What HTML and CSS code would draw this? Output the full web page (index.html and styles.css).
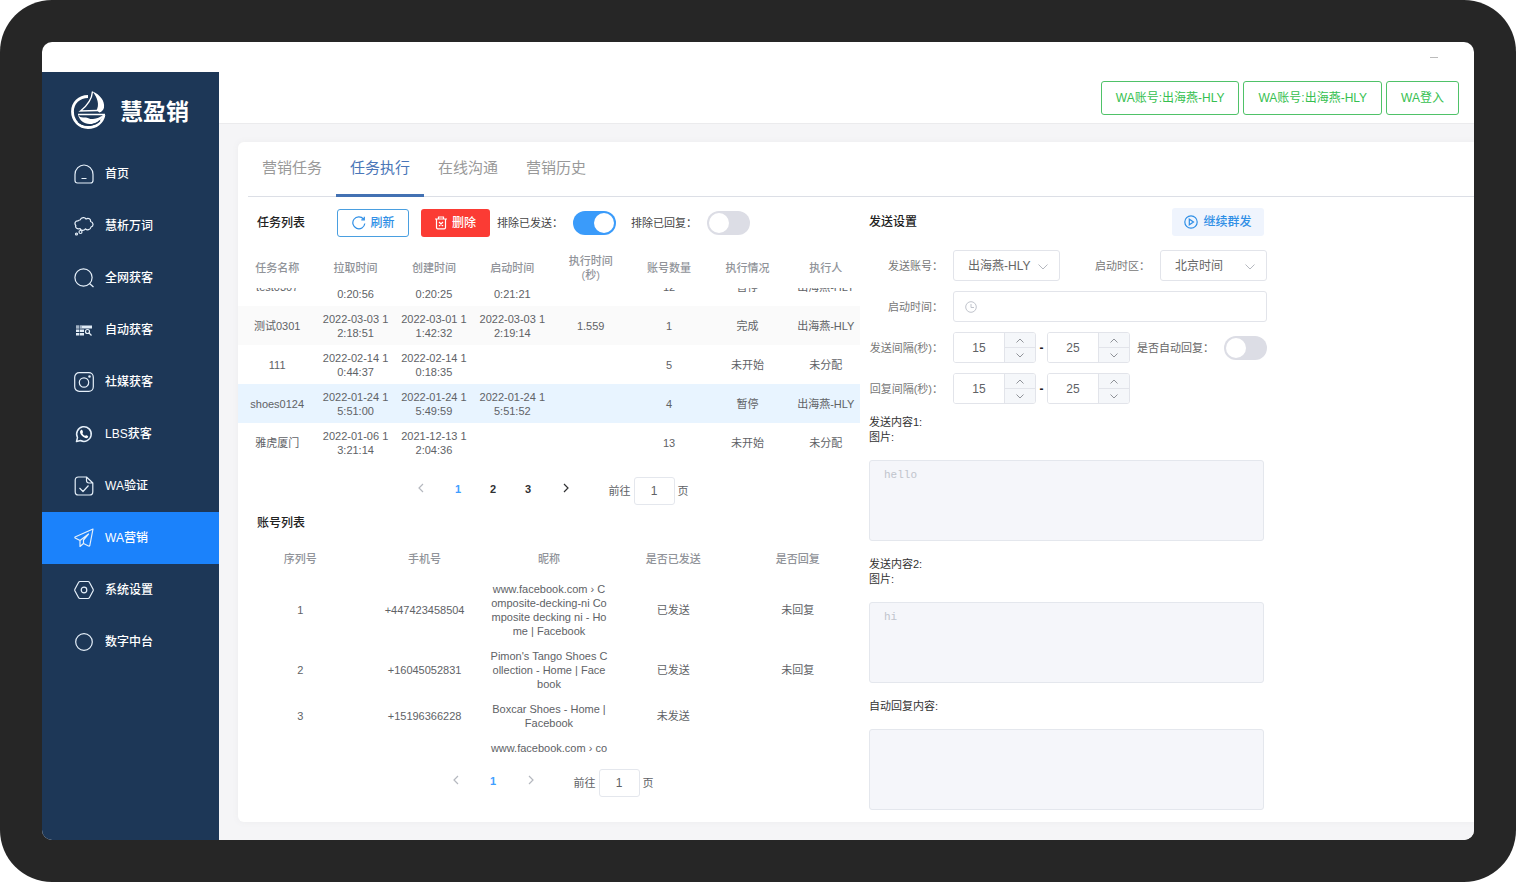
FILE: index.html
```html
<!DOCTYPE html>
<html lang="zh-CN">
	<head>
		<meta charset="UTF-8">
		<title>慧盈销</title>
		<link rel="stylesheet" href="styles.css">
	</head>
	<body>
		<div class="frame">
			<div class="screen">
				<div class="titlebar"><span class="minimize"></span></div>
				<div class="layout">
					<!-- 左侧菜单 -->
					<aside class="sidebar">
						<div class="logo">
							<svg width="36" height="40" viewBox="0 0 36 40" fill="none">
								<path d="M17 6.500C8 6.500 1.500 13 1.500 21.500C1.500 31 8.500 37.500 17 37.500C25 37.500 31.500 32.500 33 25" stroke="#fff" stroke-width="2.800"/>
								<path d="M21.500 1.500C29 4.500 34 11 33 17.500C32.500 20 31 21.500 28.500 22.500L25.500 20.500C28.500 15 27 8 21.500 1.500Z" fill="#fff"/>
								<path d="M21.500 1.500C21 8 17 15 9.500 21L26.500 20.500" stroke="#fff" stroke-width="1.400"/>
								<path d="M7 24.500H34" stroke="#fff" stroke-width="1.600"/>
								<path d="M7 24.500C9 28.500 12 27 15 27.500C18 28 19 29.500 22 29C26 28.500 29 27 32 25.500C30 31.500 25 34 18.500 34C13 34 8.500 30.500 7 24.500Z" fill="#fff"/>
								<path d="M7 31.500C11 36 24 36.500 29 30.500" stroke="#1d3757" stroke-width="1.200"/>
							</svg>
							<span class="logo-text">慧盈销</span>
						</div>
						<nav class="menu">
							<a href="#" class="menu-item">
								<svg class="menu-icon" viewBox="0 0 20 20"><path d="M1 10.500C1 5 5.500 1 10 1S19 5 19 10.500V16.500Q19 19 16.500 19H3.500Q1 19 1 16.500Z"/><path d="M7.500 14.500H12.500"/></svg>
								首页
							</a>
							<a href="#" class="menu-item">
								<svg class="menu-icon" viewBox="0 0 20 20"><path d="M6 4C7.500 1 11 1 12 3C14.500 1.500 17 3 16.500 5.500C19.500 6 20 10 17 11C16.500 14 13 14.500 11.500 12.800C10 15 6.500 14.800 6 12.500C3.500 13.500 1 12 1.800 9.500C0 7.500 1.500 4.500 4 5C4.500 4.300 5 4 6 4Z"/><circle cx="6.500" cy="16" r="1.500"/><circle cx="2.500" cy="18" r="1"/></svg>
								慧析万词
							</a>
							<a href="#" class="menu-item">
								<svg class="menu-icon" viewBox="0 0 20 20"><circle cx="9.500" cy="9.500" r="8.600"/><path d="M15.500 15.500L19.500 19"/></svg>
								全网获客
							</a>
							<a href="#" class="menu-item">
								<svg class="menu-icon" viewBox="0 0 20 20"><path fill="#dfeaf5" stroke="none" d="M2 5.500H18V8.500H2ZM2 9.500H10V12H2ZM2 13H10V15.500H2Z"/><path stroke="#1d3757" stroke-width=".6" d="M5.500 5V16M2 7H8"/><circle cx="13.500" cy="11.500" r="2"/><path d="M15 13L17.500 15.500"/></svg>
								自动获客
							</a>
							<a href="#" class="menu-item">
								<svg class="menu-icon" viewBox="0 0 20 20"><rect x=".7" y=".7" width="18.600" height="18.600" rx="4.500"/><circle cx="10" cy="10.500" r="4.700"/><circle cx="15.500" cy="4.500" r=".7"/></svg>
								社媒获客
							</a>
							<a href="#" class="menu-item">
								<svg class="menu-icon" viewBox="0 0 20 20"><path stroke-width="1.500" d="M2.500 17.500L3.500 13.500A7.300 7.300 0 1 1 6.500 16.500Z"/><path fill="#fff" stroke="none" d="M7 6C8 5.500 8.500 6 9 8C9 8.500 8.300 9 8.500 9.500C9 10.500 10 11.500 11 11.800C11.500 12 12 11 12.500 11.200C14 11.800 14.500 12.300 14 13.200C13 15 10.500 14 8.500 12.300C6.500 10.500 5 7.500 7 6Z"/></svg>
								LBS获客
							</a>
							<a href="#" class="menu-item">
								<svg class="menu-icon" viewBox="0 0 20 20"><path d="M12.500 1H4.500Q1.200 1 1.200 4.300V15.700Q1.200 19 4.500 19H15.500Q18.800 19 18.800 15.700V7ZM12.500 1V4.500Q12.500 7 15 7H18.800M5.500 12L9 15.500L14.500 9.500"/></svg>
								WA验证
							</a>
							<a href="#" class="menu-item active">
								<svg class="menu-icon" viewBox="0 0 20 20"><path d="M19 1L1 9Q.7 9.500 1.200 10L6 12.500V18.500L9.500 15.500L14.500 18Q15.500 18.300 15.800 17.500L19 1ZM6 12.500L14.500 6L9.500 12V15.500"/></svg>
								WA营销
							</a>
							<a href="#" class="menu-item">
								<svg class="menu-icon" viewBox="0 0 20 20"><path d="M6 1.500H14Q15 1.500 15.500 2.500L19 9Q19.500 10 19 11L15.500 17.500Q15 18.500 14 18.500H6Q5 18.500 4.500 17.500L1 11Q.5 10 1 9L4.500 2.500Q5 1.500 6 1.500Z"/><circle cx="10" cy="10" r="2.800"/></svg>
								系统设置
							</a>
							<a href="#" class="menu-item">
								<svg class="menu-icon" viewBox="0 0 20 20"><circle cx="10" cy="10" r="8.300"/></svg>
								数字中台
							</a>
						</nav>
					</aside>

					<main class="main">
						<header class="header">
							<button type="button" class="btn-wa">WA账号:出海燕-HLY</button>
							<button type="button" class="btn-wa">WA账号:出海燕-HLY</button>
							<button type="button" class="btn-wa">WA登入</button>
						</header>

						<div class="card">
							<nav class="tabs">
								<a href="#" class="tab">营销任务</a>
								<a href="#" class="tab active">任务执行</a>
								<a href="#" class="tab">在线沟通</a>
								<a href="#" class="tab">营销历史</a>
							</nav>

							<div class="panels">
								<section class="panel-left">
									<div class="toolbar">
										<h2 class="title">任务列表</h2>
										<button type="button" class="btn btn-refresh">
											<svg width="14" height="14" viewBox="0 0 14 14" fill="none" stroke="currentColor" stroke-width="1.200"><path d="M12.800 7.500A6 6 0 1 1 11.500 3M12.300 .8V3.800H9.300"/></svg>
											刷新
										</button>
										<button type="button" class="btn btn-delete">
											<svg width="12" height="14" viewBox="0 0 12 14" fill="none" stroke="currentColor" stroke-width="1.200"><path d="M0 3H12M1.500 3V11.500Q1.500 12.800 2.800 12.800H9.200Q10.500 12.800 10.500 11.500V3M3.500 3V1H8.500V3M4 6L8 10M8 6L4 10"/></svg>
											删除
										</button>
										<label for="sent" class="switch-label">排除已发送：</label>
										<input type="checkbox" id="sent" class="switch" checked>
										<label for="replied" class="switch-label second">排除已回复：</label>
										<input type="checkbox" id="replied" class="switch">
									</div>

									<!-- 任务表 -->
									<div class="table-wrap">
										<table class="table task-table">
											<thead>
												<tr><th>任务名称</th><th>拉取时间</th><th>创建时间</th><th>启动时间</th><th>执行时间<br>(秒)</th><th>账号数量</th><th>执行情况</th><th>执行人</th></tr>
											</thead>
										</table>
										<div class="task-body">
											<table class="table task-table">
												<tbody>
													<tr><td>test0307</td><td>2022-03-07 10:20:56</td><td>2022-03-07 10:20:25</td><td>2022-03-07 10:21:21</td><td></td><td>12</td><td>暂停</td><td>出海燕-HLY</td></tr>
													<tr class="striped"><td>测试0301</td><td>2022-03-03 12:18:51</td><td>2022-03-01 11:42:32</td><td>2022-03-03 12:19:14</td><td>1.559</td><td>1</td><td>完成</td><td>出海燕-HLY</td></tr>
													<tr><td>111</td><td>2022-02-14 10:44:37</td><td>2022-02-14 10:18:35</td><td></td><td></td><td>5</td><td>未开始</td><td>未分配</td></tr>
													<tr class="current"><td>shoes0124</td><td>2022-01-24 15:51:00</td><td>2022-01-24 15:49:59</td><td>2022-01-24 15:51:52</td><td></td><td>4</td><td>暂停</td><td>出海燕-HLY</td></tr>
													<tr><td>雅虎厦门</td><td>2022-01-06 13:21:14</td><td>2021-12-13 12:04:36</td><td></td><td></td><td>13</td><td>未开始</td><td>未分配</td></tr>
												</tbody>
											</table>
										</div>
									</div>

									<div class="pagination">
										<button type="button" class="page arrow" aria-label="上一页" disabled><svg width="6" height="10" viewBox="0 0 6 10"><path d="M5 1L1 5L5 9"/></svg></button>
										<button type="button" class="page active">1</button>
										<button type="button" class="page">2</button>
										<button type="button" class="page">3</button>
										<button type="button" class="page arrow" aria-label="下一页"><svg width="6" height="10" viewBox="0 0 6 10"><path d="M1 1L5 5L1 9"/></svg></button>
										<label class="jump">前往<input type="text" value="1">页</label>
									</div>

									<h2 class="title account-title">账号列表</h2>
									<div class="table-wrap">
										<table class="table account-table">
											<thead>
												<tr><th>序列号</th><th>手机号</th><th>昵称</th><th>是否已发送</th><th>是否回复</th></tr>
											</thead>
										</table>
										<div class="account-body">
											<table class="table account-table">
												<tbody>
													<tr><td>1</td><td>+447423458504</td><td>www.facebook.com › Composite-decking-ni Composite decking ni - Home | Facebook</td><td>已发送</td><td>未回复</td></tr>
													<tr><td>2</td><td>+16045052831</td><td>Pimon's Tango Shoes Collection - Home | Facebook</td><td>已发送</td><td>未回复</td></tr>
													<tr><td>3</td><td>+15196366228</td><td>Boxcar Shoes - Home | Facebook</td><td>未发送</td><td></td></tr>
													<tr><td></td><td></td><td>www.facebook.com › co</td><td></td><td></td></tr>
												</tbody>
											</table>
										</div>
									</div>

									<div class="pagination">
										<button type="button" class="page arrow" aria-label="上一页" disabled><svg width="6" height="10" viewBox="0 0 6 10"><path d="M5 1L1 5L5 9"/></svg></button>
										<button type="button" class="page active">1</button>
										<button type="button" class="page arrow" aria-label="下一页" disabled><svg width="6" height="10" viewBox="0 0 6 10"><path d="M1 1L5 5L1 9"/></svg></button>
										<label class="jump">前往<input type="text" value="1">页</label>
									</div>
								</section>

								<!-- 发送设置 -->
								<section class="panel-right">
									<div class="setting-head">
										<h2 class="title">发送设置</h2>
										<button type="button" class="btn btn-continue">
											<svg width="14" height="14" viewBox="0 0 14 14" fill="none" stroke="currentColor" stroke-width="1.200"><circle cx="7" cy="7" r="6.200"/><path d="M5.300 4.200V9.800L9.500 7Z"/></svg>
											继续群发
										</button>
									</div>

									<form class="form">
										<div class="form-row">
											<label class="form-label" for="account">发送账号：</label>
											<div class="select">
												<select id="account"><option>出海燕-HLY</option></select>
												<svg class="select-arrow" width="10" height="6" viewBox="0 0 10 6"><path d="M.5 .5L5 5L9.500 .5"/></svg>
											</div>
											<label class="form-label zone" for="zone">启动时区：</label>
											<div class="select">
												<select id="zone"><option>北京时间</option></select>
												<svg class="select-arrow" width="10" height="6" viewBox="0 0 10 6"><path d="M.5 .5L5 5L9.500 .5"/></svg>
											</div>
										</div>
										<div class="form-row">
											<label class="form-label" for="start">启动时间：</label>
											<div class="date">
												<svg width="12" height="12" viewBox="0 0 12 12"><circle cx="6" cy="6" r="5.300"/><path d="M6 3V6.500H9"/></svg>
												<input type="text" id="start">
											</div>
										</div>
										<div class="form-row">
											<label class="form-label" for="send-min">发送间隔(秒)：</label>
											<div class="number">
												<input type="text" id="send-min" value="15">
												<div class="steps">
													<button type="button" aria-label="增加"><svg width="8" height="5" viewBox="0 0 8 5"><path d="M.5 4.500L4 1L7.500 4.500"/></svg></button>
													<button type="button" aria-label="减少"><svg width="8" height="5" viewBox="0 0 8 5"><path d="M.5 .5L4 4L7.500 .5"/></svg></button>
												</div>
											</div>
											<span class="dash">-</span>
											<div class="number">
												<input type="text" value="25" aria-label="发送间隔上限">
												<div class="steps">
													<button type="button" aria-label="增加"><svg width="8" height="5" viewBox="0 0 8 5"><path d="M.5 4.500L4 1L7.500 4.500"/></svg></button>
													<button type="button" aria-label="减少"><svg width="8" height="5" viewBox="0 0 8 5"><path d="M.5 .5L4 4L7.500 .5"/></svg></button>
												</div>
											</div>
											<label class="auto-label" for="auto">是否自动回复：</label>
											<input type="checkbox" id="auto" class="switch">
										</div>
										<div class="form-row">
											<label class="form-label" for="reply-min">回复间隔(秒)：</label>
											<div class="number">
												<input type="text" id="reply-min" value="15">
												<div class="steps">
													<button type="button" aria-label="增加"><svg width="8" height="5" viewBox="0 0 8 5"><path d="M.5 4.500L4 1L7.500 4.500"/></svg></button>
													<button type="button" aria-label="减少"><svg width="8" height="5" viewBox="0 0 8 5"><path d="M.5 .5L4 4L7.500 .5"/></svg></button>
												</div>
											</div>
											<span class="dash">-</span>
											<div class="number">
												<input type="text" value="25" aria-label="回复间隔上限">
												<div class="steps">
													<button type="button" aria-label="增加"><svg width="8" height="5" viewBox="0 0 8 5"><path d="M.5 4.500L4 1L7.500 4.500"/></svg></button>
													<button type="button" aria-label="减少"><svg width="8" height="5" viewBox="0 0 8 5"><path d="M.5 .5L4 4L7.500 .5"/></svg></button>
												</div>
											</div>
										</div>

										<div class="content-block">
											<label for="content1">发送内容1:<br>图片:</label>
											<textarea id="content1" disabled>hello</textarea>
										</div>
										<div class="content-block">
											<label for="content2">发送内容2:<br>图片:</label>
											<textarea id="content2" disabled>hi</textarea>
										</div>
										<div class="content-block">
											<label for="content3">自动回复内容:</label>
											<textarea id="content3" disabled></textarea>
										</div>
									</form>
								</section>
							</div>
						</div>
					</main>
				</div>
			</div>
		</div>
	</body>
</html>
```

FILE: styles.css
```css
*{
	margin: 0;
	padding: 0;
	box-sizing: border-box;
}

body{
	background-color: #fff;
	font-family: "Liberation Sans", "Noto Sans CJK SC", sans-serif;
	font-size: 11px;
	color: #606266;
}

a{
	text-decoration: none;
}

button, input, select{
	font-family: inherit;
	font-size: 12px;
}

/* 外框 */
.frame{
	display: flex;
	min-height: 100vh;
	padding: 42px;
	background-color: #262626;
	border-radius: 52px;
}

.screen{
	flex: 1;
	display: flex;
	flex-direction: column;
	background-color: #fff;
	border-radius: 10px;
	overflow: hidden;
}

.titlebar{
	display: flex;
	justify-content: flex-end;
	align-items: center;
	height: 30px;
	padding-right: 36px;
}

.minimize{
	width: 8px;
	height: 1px;
	background-color: #bbb;
}

.layout{
	flex: 1;
	display: flex;
}

/* 左侧菜单 */
.sidebar{
	flex: 0 0 177px;
	background-color: #1d3757;
}

.logo{
	display: flex;
	align-items: center;
	gap: 13px;
	height: 76px;
	padding-left: 29px;
}

.logo-text{
	font-size: 23px;
	font-weight: bold;
	color: #fff;
}

.menu-item{
	display: flex;
	align-items: center;
	gap: 11px;
	height: 52px;
	padding-left: 32px;
	font-size: 12px;
	line-height: 16px;
	font-weight: 500;
	color: #fff;
}

.menu-item.active{
	background-color: #1b82fb;
}

.menu-icon{
	width: 20px;
	height: 20px;
	fill: none;
	stroke: #e6f0fa;
	stroke-width: 1.2;
	stroke-linejoin: round;
}

/* 右侧主体 */
.main{
	flex: 1;
	display: flex;
	flex-direction: column;
	min-width: 0;
	background-color: #f5f5f7;
}

.header{
	display: flex;
	justify-content: flex-end;
	align-items: center;
	gap: 4px;
	height: 52px;
	padding-right: 15px;
	background-color: #fff;
	border-bottom: 1px solid #ebebed;
}

.btn-wa{
	height: 34px;
	padding: 0 14px;
	border: 1px solid #4fc268;
	border-radius: 3px;
	background-color: #fff;
	line-height: 16px;
	color: #36bf50;
}

.card{
	flex: 1;
	margin: 18px 0 18px 19px;
	background-color: #fff;
	border-radius: 6px 0 0 6px;
	box-shadow: 0 0 6px #ececee;
}

.tabs{
	display: flex;
	height: 55px;
	margin-left: 10px;
	border-bottom: 1px solid #dcdfe6;
}

.tab{
	height: 55px;
	padding: 0 14px;
	line-height: 52px;
	font-size: 15px;
	color: #999;
}

.tab.active{
	color: #4a76b8;
	border-bottom: 3px solid #4371b3;
}

.panels{
	display: grid;
	grid-template-columns: 627px 398px;
	gap: 4px;
}

.title{
	font-size: 12px;
	line-height: 16px;
	font-weight: 500;
	color: #222;
}

/* 任务列表 */
.panel-left{
	padding-top: 12px;
}

.toolbar{
	display: flex;
	align-items: center;
	height: 28px;
	padding-left: 19px;
}

.btn{
	display: flex;
	align-items: center;
	justify-content: center;
	gap: 5px;
	height: 28px;
	border: 1px solid transparent;
	border-radius: 3px;
	line-height: 16px;
	font-weight: 500;
}

.btn-refresh{
	width: 72px;
	margin-left: 32px;
	border-color: #4a9fe0;
	background-color: #fff;
	color: #2f8fe6;
}

.btn-delete{
	width: 69px;
	margin: 0 7px 0 12px;
	background-color: #fb3b34;
	color: #fff;
}

.switch-label{
	margin-right: 10px;
	line-height: 14px;
	color: #444;
}

.switch-label.second{
	margin-left: 15px;
}

.switch{
	appearance: none;
	display: flex;
	width: 43px;
	height: 24px;
	padding: 2px;
	border-radius: 12px;
	background-color: #dcdde5;
}

.switch::before{
	content: "";
	width: 20px;
	height: 20px;
	border-radius: 50%;
	background-color: #fff;
}

.switch:checked{
	justify-content: flex-end;
	background-color: #3a9bfa;
}

/* 表格 */
.table-wrap{
	margin: 11px 5px 0 0;
	overflow: hidden;
}

.table{
	table-layout: fixed;
	border-collapse: collapse;
	line-height: 14px;
	text-align: center;
}

.table th{
	font-weight: 500;
	color: #909399;
}

.table td{
	padding: 6px 3px 5px;
	word-break: break-all;
}

.task-table{
	width: 627px;
}

.task-table th{
	height: 40px;
}

/* 列宽较窄，日期在小时处换行 */
.task-table td{
	padding: 6px 5px 5px;
}

/* 表体滚动到底部 */
.task-body{
	display: flex;
	flex-direction: column;
	justify-content: flex-end;
	height: 174px;
	overflow: hidden;
}

.striped{
	background-color: #fafafa;
}

.current{
	background-color: #e8f4ff;
}

.account-title{
	margin: 10px 0 0 19px;
}

.account-table{
	width: 100%;
}

.account-table th{
	height: 34px;
}

.account-body{
	height: 178px;
	overflow: hidden;
}

/* 分页 */
.pagination{
	display: flex;
	justify-content: center;
	margin: 15px 14px 0 0;
}

.page{
	width: 35px;
	height: 24px;
	border: none;
	background: none;
	font-size: 11px;
	font-weight: bold;
	color: #303133;
}

.page.active{
	color: #409eff;
}

.page.arrow{
	width: 40px;
}

.page svg{
	fill: none;
	stroke: #303133;
	stroke-width: 1.2;
}

.page:disabled svg{
	stroke: #b5b8bf;
}

.jump{
	display: flex;
	align-items: center;
	gap: 3px;
	height: 28px;
	margin-left: 23px;
	line-height: 14px;
}

.jump input{
	width: 41px;
	height: 28px;
	border: 1px solid #e4e7ed;
	border-radius: 3px;
	text-align: center;
	color: #606266;
}

/* 发送设置 */
.panel-right{
	padding-top: 11px;
}

.setting-head{
	display: flex;
	justify-content: space-between;
	align-items: center;
	padding-right: 3px;
}

.btn-continue{
	width: 92px;
	background-color: #eff4fd;
	color: #2f8fe6;
}

.form{
	display: flex;
	flex-direction: column;
	gap: 10px;
	margin-top: 14px;
}

.form-row{
	display: flex;
	align-items: center;
	height: 31px;
}

.form-label{
	width: 84px;
	padding-right: 10px;
	text-align: right;
	line-height: 14px;
	white-space: nowrap;
	color: #777;
}

.form-label.zone{
	width: 100px;
}

.select{
	position: relative;
	width: 107px;
}

.select select{
	appearance: none;
	width: 100%;
	height: 31px;
	padding: 0 14px;
	border: 1px solid #e2e4ea;
	border-radius: 3px;
	background-color: #fff;
	color: #666;
}

.select-arrow{
	position: absolute;
	right: 12px;
	top: 14px;
	fill: none;
	stroke: #b5b8bf;
}

.date{
	flex: 1;
	display: flex;
	align-items: center;
	gap: 8px;
	height: 31px;
	padding: 0 11px;
	border: 1px solid #e2e4ea;
	border-radius: 3px;
}

.date svg{
	fill: none;
	stroke: #c0c4cc;
}

.date input{
	flex: 1;
	border: none;
	outline: none;
}

.number{
	display: flex;
	width: 83px;
	height: 31px;
	border: 1px solid #e2e4ea;
	border-radius: 3px;
	overflow: hidden;
}

.number input{
	width: 50px;
	border: none;
	text-align: center;
	color: #606266;
}

.steps{
	flex: 1;
	display: flex;
	flex-direction: column;
	border-left: 1px solid #e2e4ea;
}

.steps button{
	flex: 1;
	display: flex;
	align-items: center;
	justify-content: center;
	border: none;
	background-color: #f5f7fa;
}

.steps button + button{
	border-top: 1px solid #e2e4ea;
}

.steps svg{
	fill: none;
	stroke: #909399;
}

.dash{
	width: 11px;
	text-align: center;
	font-size: 12px;
	font-weight: bold;
	color: #222;
}

.auto-label{
	margin: 0 auto 0 7px;
	line-height: 14px;
	color: #666;
}

.content-block{
	display: flex;
	flex-direction: column;
	gap: 15px;
	margin: 1px 3px 5px 0;
	line-height: 15px;
	color: #333;
}

.content-block textarea{
	height: 81px;
	padding: 8px 14px;
	border: 1px solid #e4e7ed;
	border-radius: 3px;
	background-color: #f5f6fa;
	font-family: "Liberation Mono", monospace;
	font-size: 11px;
	color: #c0c4cc;
	resize: none;
}
```
